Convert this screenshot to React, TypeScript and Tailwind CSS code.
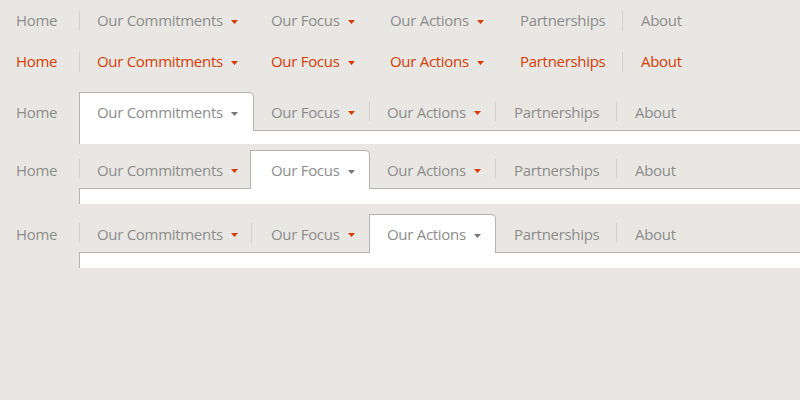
import React from "react";

const GRAY = "text-[#8c8c8c]";
const RED = "text-[#d83b01]";

function Caret({ color }: { color: string }) {
  return (
    <svg width="7" height="4" viewBox="0 0 7 4" className="ml-[8px] mt-[2px] shrink-0">
      <path d="M0 0H7L3.5 4Z" fill={color} />
    </svg>
  );
}

function Sep() {
  return <div className="w-px h-[20px] self-center bg-[#d3d1cc]" />;
}

type ItemProps = {
  label: string;
  caret?: string;
  cls: string;
  text: string;
};

function Item({ label, caret, cls, text }: ItemProps) {
  return (
    <div className={`flex items-center shrink-0 ${cls}`}>
      <span className={`${text} whitespace-nowrap`}>{label}</span>
      {caret ? <Caret color={caret} /> : null}
    </div>
  );
}

function PlainRow({ text, caret, h }: { text: string; caret: string; h: string }) {
  return (
    <div className={`flex ${h}`}>
      <Item label="Home" cls="w-[79px] pl-[16px]" text={text} />
      <Sep />
      <Item label="Our Commitments" caret={caret} cls="w-[191px] pl-[17px]" text={text} />
      <Item label="Our Focus" caret={caret} cls="w-[119px]" text={text} />
      <Item label="Our Actions" caret={caret} cls="w-[130px]" text={text} />
      <Item label="Partnerships" cls="w-[102px]" text={text} />
      <Sep />
      <Item label="About" cls="pl-[18px]" text={text} />
    </div>
  );
}

const TAB =
  "relative z-10 -mb-px h-[39px] pt-[1px] bg-white border-l border-t border-r border-[#b4b3b0] rounded-tr-[5px]";

function Panel({ h }: { h: string }) {
  return <div className={`ml-[79px] bg-white border-l border-t border-[#b4b3b0] ${h}`} />;
}

export default function App() {
  return (
    <div
      className="w-[800px] h-[400px] bg-[#e9e7e3] text-[15px] tracking-[-0.3px] overflow-hidden"
      style={{ fontFamily: '"Open Sans", "Noto Sans", sans-serif' }}
    >
      <PlainRow text={GRAY} caret="#d83b01" h="h-[41px]" />
      <PlainRow text={RED} caret="#d83b01" h="h-[41px]" />

      {/* Row 3: Our Commitments active */}
      <div className="mt-[10px]">
        <div className="flex h-[38px]">
          <Item label="Home" cls="w-[79px] pl-[16px] pt-[2px]" text={GRAY} />
          <Item label="Our Commitments" caret="#777777" cls={`${TAB} w-[175px] pl-[17px]`} text={GRAY} />
          <Item label="Our Focus" caret="#d83b01" cls="w-[115px] pl-[17px] pt-[2px]" text={GRAY} />
          <Sep />
          <Item label="Our Actions" caret="#d83b01" cls="w-[125px] pl-[17px] pt-[2px]" text={GRAY} />
          <Sep />
          <Item label="Partnerships" cls="w-[120px] pl-[18px] pt-[2px]" text={GRAY} />
          <Sep />
          <Item label="About" cls="pl-[18px] pt-[2px]" text={GRAY} />
        </div>
        <Panel h="h-[14px]" />
      </div>

      {/* Row 4: Our Focus active */}
      <div className="mt-[6px]">
        <div className="flex h-[38px]">
          <Item label="Home" cls="w-[79px] pl-[16px] pt-[2px]" text={GRAY} />
          <Sep />
          <Item label="Our Commitments" caret="#d83b01" cls="w-[170px] pl-[17px] pt-[2px]" text={GRAY} />
          <Item label="Our Focus" caret="#777777" cls={`${TAB} w-[120px] pl-[20px]`} text={GRAY} />
          <Item label="Our Actions" caret="#d83b01" cls="w-[125px] pl-[17px] pt-[2px]" text={GRAY} />
          <Sep />
          <Item label="Partnerships" cls="w-[120px] pl-[18px] pt-[2px]" text={GRAY} />
          <Sep />
          <Item label="About" cls="pl-[18px] pt-[2px]" text={GRAY} />
        </div>
        <Panel h="h-[16px]" />
      </div>

      {/* Row 5: Our Actions active */}
      <div className="mt-[10px]">
        <div className="flex h-[38px]">
          <Item label="Home" cls="w-[79px] pl-[16px] pt-[2px]" text={GRAY} />
          <Sep />
          <Item label="Our Commitments" caret="#d83b01" cls="w-[171px] pl-[17px] pt-[2px]" text={GRAY} />
          <Sep />
          <Item label="Our Focus" caret="#d83b01" cls="w-[117px] pl-[19px] pt-[2px]" text={GRAY} />
          <Item label="Our Actions" caret="#777777" cls={`${TAB} w-[127px] pl-[17px]`} text={GRAY} />
          <Item label="Partnerships" cls="w-[120px] pl-[18px] pt-[2px]" text={GRAY} />
          <Sep />
          <Item label="About" cls="pl-[18px] pt-[2px]" text={GRAY} />
        </div>
        <Panel h="h-[16px]" />
      </div>
    </div>
  );
}
